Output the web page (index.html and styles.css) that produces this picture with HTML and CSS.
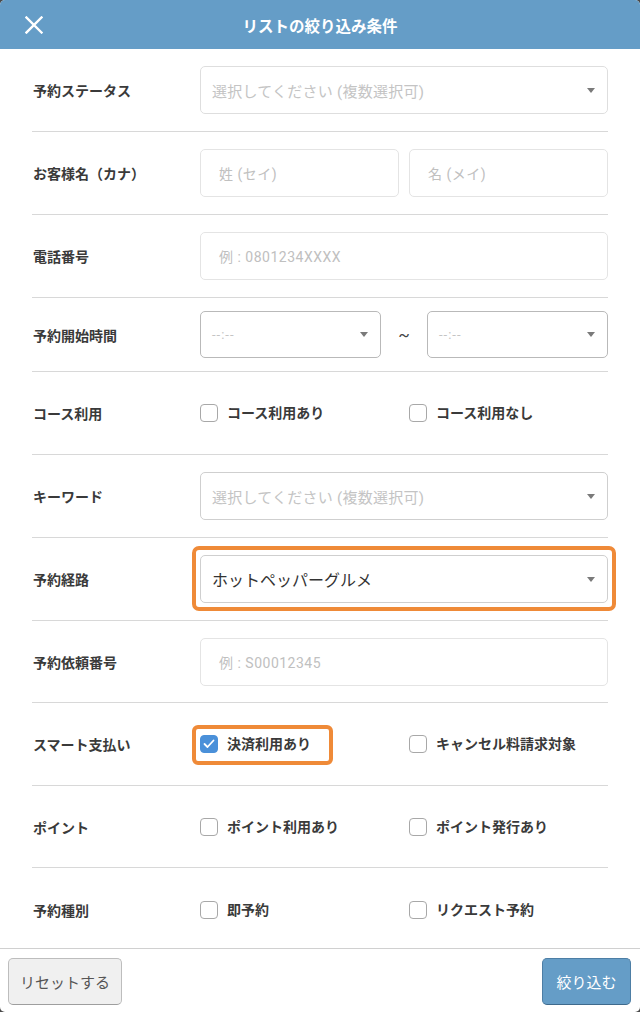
FILE: index.html
```html
<!DOCTYPE html>
<html lang="ja">
<head>
<meta charset="utf-8">
<title>リストの絞り込み条件</title>
<link rel="stylesheet" href="styles.css">
</head>
<body>
<div class="modal">
  <header class="head">
    <button class="close" aria-label="閉じる">
      <svg width="18" height="18" viewBox="0 0 18 18"><path d="M1.5 1.5 L16.5 16.5 M16.5 1.5 L1.5 16.5" stroke="#fff" stroke-width="2.4" stroke-linecap="square" fill="none"/></svg>
    </button>
    <h1 class="title">リストの絞り込み条件</h1>
  </header>

  <main class="body">
    <div class="row">
      <div class="label">予約ステータス</div>
      <div class="field"><div class="select ph">選択してください (複数選択可)<span class="caret"></span></div></div>
    </div>

    <div class="row">
      <div class="label">お客様名（カナ）</div>
      <div class="field two">
        <div class="input">姓 (セイ)</div>
        <div class="input">名 (メイ)</div>
      </div>
    </div>

    <div class="row">
      <div class="label">電話番号</div>
      <div class="field"><div class="input">例 : 0801234XXXX</div></div>
    </div>

    <div class="row short">
      <div class="label">予約開始時間</div>
      <div class="field range">
        <div class="select dark ph time">--:--<span class="caret"></span></div>
        <span class="tilde">~</span>
        <div class="select dark ph time">--:--<span class="caret"></span></div>
      </div>
    </div>

    <div class="row">
      <div class="label">コース利用</div>
      <div class="field two">
        <label class="check"><span class="box"></span>コース利用あり</label>
        <label class="check"><span class="box"></span>コース利用なし</label>
      </div>
    </div>

    <div class="row">
      <div class="label">キーワード</div>
      <div class="field"><div class="select mid ph">選択してください (複数選択可)<span class="caret"></span></div></div>
    </div>

    <div class="row">
      <div class="label">予約経路</div>
      <div class="field"><div class="select mid value hl">ホットペッパーグルメ<span class="caret"></span></div></div>
    </div>

    <div class="row tight">
      <div class="label">予約依頼番号</div>
      <div class="field"><div class="input">例 : S00012345</div></div>
    </div>

    <div class="row">
      <div class="label">スマート支払い</div>
      <div class="field two">
        <div><label class="check hl-check"><span class="box on"><svg width="12" height="10" viewBox="0 0 12 10"><path d="M1.5 5 L4.5 8 L10.5 1.5" stroke="#fff" stroke-width="1.8" fill="none" stroke-linecap="round" stroke-linejoin="round"/></svg></span>決済利用あり</label></div>
        <label class="check"><span class="box"></span>キャンセル料請求対象</label>
      </div>
    </div>

    <div class="row tight">
      <div class="label">ポイント</div>
      <div class="field two">
        <label class="check"><span class="box"></span>ポイント利用あり</label>
        <label class="check"><span class="box"></span>ポイント発行あり</label>
      </div>
    </div>

    <div class="row last">
      <div class="label">予約種別</div>
      <div class="field two">
        <label class="check"><span class="box"></span>即予約</label>
        <label class="check"><span class="box"></span>リクエスト予約</label>
      </div>
    </div>
  </main>

  <footer class="foot">
    <button class="btn reset">リセットする</button>
    <button class="btn submit">絞り込む</button>
  </footer>
</div>
</body>
</html>
```

FILE: styles.css
```css
* { box-sizing: border-box; }
html { background: #4a4a4a; }
body {
  margin: 0;
  font-family: Roboto, "Noto Sans CJK JP", "Noto Sans", sans-serif;
  color: #333;
}
.modal {
  width: 640px;
  height: 1012px;
  background: #fff;
  border-radius: 5px;
  overflow: hidden;
  display: flex;
  flex-direction: column;
}
.head {
  height: 49px;
  background: #659dc7;
  display: flex;
  align-items: center;
  justify-content: center;
  position: relative;
  flex: none;
}
.close {
  position: absolute;
  left: 25px;
  top: 16px;
  width: 18px;
  height: 18px;
  padding: 0;
  border: 0;
  background: none;
  display: block;
}
.close svg { display: block; }
.title {
  margin: 0;
  color: #fff;
  font-size: 15.5px;
  font-weight: bold;
}
.body {
  flex: 1;
  overflow: hidden;
}
.row {
  margin: 0 32px;
  height: 83px;
  border-bottom: 1px solid #d8d8d8;
  display: grid;
  grid-template-columns: 168px 408px;
  align-items: center;
}
.row.short { height: 74px; }
.row.tight { height: 82px; }
.row.last { border-bottom: 0; }
.label {
  font-size: 14px;
  font-weight: bold;
  color: #3a3a3a;
  padding-left: 1px;
}
.field.two {
  display: grid;
  grid-template-columns: 199px 199px;
  column-gap: 10px;
}
.field.range {
  display: grid;
  grid-template-columns: 181px 46px 181px;
  align-items: center;
}
.tilde {
  text-align: center;
  font-size: 17px;
  color: #444;
}
.select {
  height: 48px;
  border: 1px solid #dedede;
  border-radius: 5px;
  padding: 0 12px 0 11px;
  display: flex;
  align-items: center;
  justify-content: space-between;
  font-size: 15px;
  background: #fff;
}
.select.mid { border-color: #cfcfcf; }
.select.dark { border-color: #b9b9b9; height: 47px; }
.select.ph { color: #c4c4c4; letter-spacing: 0.25px; }
.select.time { font-size: 13px; letter-spacing: 1px; }
.select.value { font-size: 16px; color: #333; }
.caret {
  width: 0;
  height: 0;
  border-left: 4px solid transparent;
  border-right: 4px solid transparent;
  border-top: 5px solid #7a7a7a;
  flex: none;
}
.input {
  height: 48px;
  border: 1px solid #e4e4e4;
  border-radius: 5px;
  padding: 0 18px;
  display: flex;
  align-items: center;
  font-size: 14px;
  letter-spacing: 0.5px;
  color: #c0c0c0;
}
.check {
  display: inline-flex;
  align-items: center;
  gap: 9px;
  font-size: 14px;
  font-weight: bold;
  color: #3a3a3a;
  line-height: 20px;
}
.box {
  width: 18px;
  height: 18px;
  border: 1px solid #a8a8a8;
  border-radius: 4px;
  background: #fff;
  flex: none;
  display: flex;
  align-items: center;
  justify-content: center;
}
.box.on {
  background: #4a90d9;
  border-color: #4a90d9;
}
.hl, .hl-check { position: relative; }
.hl::after {
  content: "";
  position: absolute;
  top: -10px;
  left: -9px;
  right: -9px;
  bottom: -9px;
  border: 4px solid #ef8a38;
  border-radius: 7px;
  pointer-events: none;
}
.hl-check::after {
  content: "";
  position: absolute;
  top: -9px;
  left: -8px;
  right: -22px;
  bottom: -11px;
  border: 4px solid #ef8a38;
  border-radius: 6px;
  pointer-events: none;
}
.foot {
  flex: none;
  height: 64px;
  border-top: 1px solid #d0d0d0;
  display: flex;
  justify-content: space-between;
  align-items: flex-start;
  padding: 9px 9px 0 8px;
}
.btn {
  height: 47px;
  border-radius: 5px;
  font-family: Roboto, "Noto Sans CJK JP", "Noto Sans", sans-serif;
  font-size: 15px;
  padding: 0;
}
.reset {
  width: 114px;
  background: #f0f0f0;
  border: 1px solid #bdbdbd;
  border-bottom-color: #9e9e9e;
  color: #555;
}
.submit {
  width: 89px;
  background: #659dc7;
  border: 1px solid #4d7ea5;
  border-bottom-color: #3f6a8c;
  color: #fff;
}
```
